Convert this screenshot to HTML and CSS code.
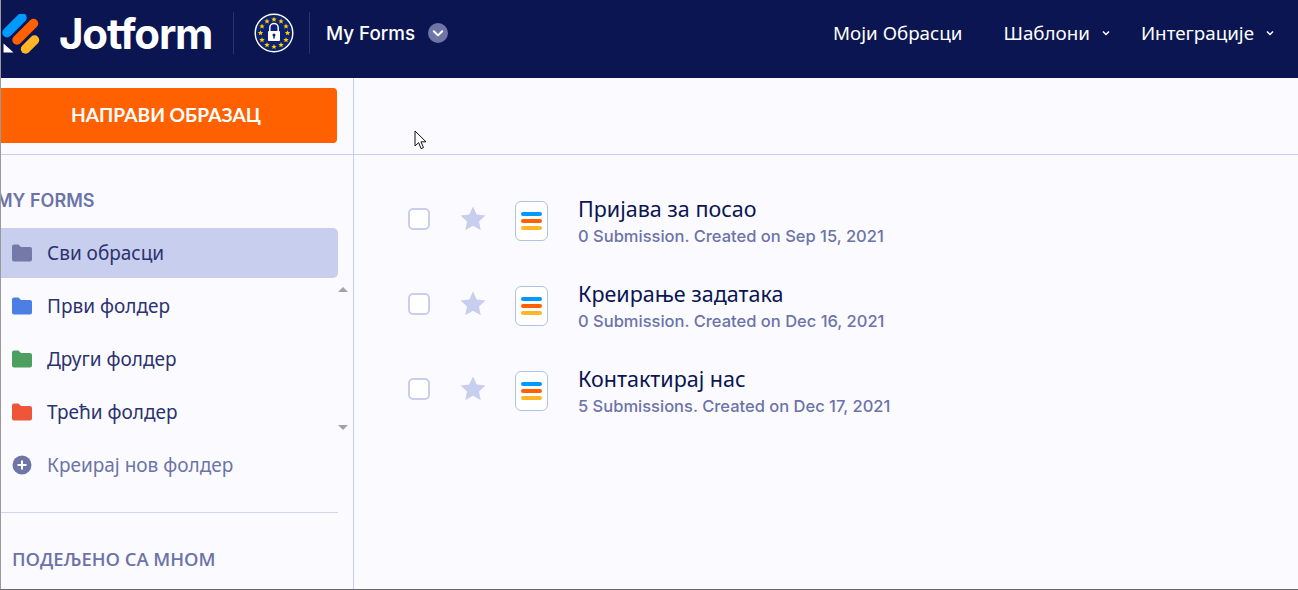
FILE: index.html
```html
<!DOCTYPE html>
<html>
<head>
  <meta charset="UTF-8">
  <title>My Forms</title>
  <link rel="stylesheet" href="styles.css">
</head>
<body>
  <div class="page">
    <header class="topbar">
      <svg class="logo-mark" width="40" height="40" viewBox="0 0 40 40">
        <line x1="7" y1="18.7" x2="22" y2="3.7" stroke="#0099FF" stroke-width="9.5" stroke-linecap="round"/>
        <line x1="17" y1="26" x2="33.5" y2="9.5" stroke="#FF6100" stroke-width="9.5" stroke-linecap="round"/>
        <line x1="25.5" y1="35" x2="34.5" y2="26" stroke="#FFB629" stroke-width="9.5" stroke-linecap="round"/>
        <path d="M3.5 29.5 L13.5 38.5 L3.5 38.5 Z" fill="#fff"/>
      </svg>
      <span class="logo-text">Jotform</span>
      <span class="bar-sep"></span>
      <svg class="eu-badge" width="40" height="40" viewBox="0 0 40 40">
        <defs>
          <polygon id="st" points="0,-2.8 .8,-.9 2.7,-.9 1.2,.4 1.7,2.3 0,1.2 -1.7,2.3 -1.2,.4 -2.7,-.9 -.8,-.9" fill="#FFCC00"/>
        </defs>
        <circle cx="20" cy="20" r="18.8" fill="#0C2270" stroke="#fff" stroke-width="1.4"/>
        <use href="#st" x="20" y="6.5"/><use href="#st" x="27" y="8.4"/><use href="#st" x="32" y="13.4"/>
        <use href="#st" x="33.5" y="20"/><use href="#st" x="32" y="27"/><use href="#st" x="27" y="32"/>
        <use href="#st" x="20" y="33.8"/><use href="#st" x="13" y="32"/><use href="#st" x="8" y="27"/>
        <use href="#st" x="6.5" y="20"/><use href="#st" x="8" y="13.4"/><use href="#st" x="13" y="8.4"/>
        <path d="M15.8 18v-3.2a4.2 4.2 0 0 1 8.4 0V18" fill="none" stroke="#fff" stroke-width="1.5"/>
        <rect x="14" y="18" width="12" height="10" rx="1" fill="#fff"/>
        <circle cx="20" cy="22" r="1.5" fill="#0C2270"/>
        <rect x="19.3" y="22" width="1.4" height="3.6" fill="#0C2270"/>
      </svg>
      <span class="bar-sep"></span>
      <span class="crumb">My Forms</span>
      <svg class="crumb-arrow" width="20" height="20" viewBox="0 0 20 20">
        <circle cx="10" cy="10" r="10" fill="#6F76A7"/>
        <path d="M5.8 8.2 L10 12.4 L14.2 8.2" fill="none" stroke="#fff" stroke-width="2" stroke-linecap="round" stroke-linejoin="round"/>
      </svg>
      <nav class="nav">
        <a class="nav-link first">Моји Обрасци</a>
        <a class="nav-link">Шаблони
          <svg width="8" height="6" viewBox="0 0 8 6"><path d="M1 1.5 L4 4.5 L7 1.5" fill="none" stroke="#fff" stroke-width="1.5"/></svg>
        </a>
        <a class="nav-link">Интеграције
          <svg width="8" height="6" viewBox="0 0 8 6"><path d="M1 1.5 L4 4.5 L7 1.5" fill="none" stroke="#fff" stroke-width="1.5"/></svg>
        </a>
      </nav>
    </header>

    <div class="workspace">
      <div class="create-cell">
        <button class="create-btn">НАПРАВИ ОБРАЗАЦ</button>
      </div>
      <div class="toolbar-cell"></div>

      <aside class="sidebar">
        <div class="side-title cut">MY FORMS</div>
        <div class="folders">
          <span class="scroll-up"></span>
          <span class="scroll-down"></span>
          <div class="folder selected">
            <svg class="folder-icon" viewBox="0 0 20 17"><path d="M0 2a2 2 0 0 1 2-2h4.5l2.5 2.5h9a2 2 0 0 1 2 2V15a2 2 0 0 1-2 2H2a2 2 0 0 1-2-2z" fill="#7479A8"/></svg>
            Сви обрасци
          </div>
          <div class="folder">
            <svg class="folder-icon" viewBox="0 0 20 17"><path d="M0 2a2 2 0 0 1 2-2h4.5l2.5 2.5h9a2 2 0 0 1 2 2V15a2 2 0 0 1-2 2H2a2 2 0 0 1-2-2z" fill="#4C7FE3"/></svg>
            Први фолдер
          </div>
          <div class="folder">
            <svg class="folder-icon" viewBox="0 0 20 17"><path d="M0 2a2 2 0 0 1 2-2h4.5l2.5 2.5h9a2 2 0 0 1 2 2V15a2 2 0 0 1-2 2H2a2 2 0 0 1-2-2z" fill="#4C9F5F"/></svg>
            Други фолдер
          </div>
          <div class="folder">
            <svg class="folder-icon" viewBox="0 0 20 17"><path d="M0 2a2 2 0 0 1 2-2h4.5l2.5 2.5h9a2 2 0 0 1 2 2V15a2 2 0 0 1-2 2H2a2 2 0 0 1-2-2z" fill="#EE5539"/></svg>
            Трећи фолдер
          </div>
          <div class="folder add">
            <svg class="folder-icon" viewBox="0 0 20 20"><circle cx="10" cy="10" r="9.5" fill="#6F76A7"/><path d="M10 5.5v9M5.5 10h9" stroke="#fff" stroke-width="2"/></svg>
            Креирај нов фолдер
          </div>
        </div>
        <div class="side-line"></div>
        <div class="side-title">ПОДЕЉЕНО СА МНОМ</div>
      </aside>

      <main class="forms">
        <div class="form-row">
          <span class="check"></span>
          <svg class="star" width="26" height="25" viewBox="0 0 26 25"><path d="M13 .5l3.7 8 8.8 1-6.5 6 1.8 8.7-7.8-4.4-7.8 4.4 1.8-8.7-6.5-6 8.8-1z" fill="#C8CEED"/></svg>
          <span class="form-icon"><i class="blue"></i><i class="orange"></i><i class="yellow"></i></span>
          <div class="form-info">
            <div class="form-name">Пријава за посао</div>
            <div class="form-meta">0 Submission. Created on Sep 15, 2021</div>
          </div>
        </div>
        <div class="form-row">
          <span class="check"></span>
          <svg class="star" width="26" height="25" viewBox="0 0 26 25"><path d="M13 .5l3.7 8 8.8 1-6.5 6 1.8 8.7-7.8-4.4-7.8 4.4 1.8-8.7-6.5-6 8.8-1z" fill="#C8CEED"/></svg>
          <span class="form-icon"><i class="blue"></i><i class="orange"></i><i class="yellow"></i></span>
          <div class="form-info">
            <div class="form-name">Креирање задатака</div>
            <div class="form-meta">0 Submission. Created on Dec 16, 2021</div>
          </div>
        </div>
        <div class="form-row">
          <span class="check"></span>
          <svg class="star" width="26" height="25" viewBox="0 0 26 25"><path d="M13 .5l3.7 8 8.8 1-6.5 6 1.8 8.7-7.8-4.4-7.8 4.4 1.8-8.7-6.5-6 8.8-1z" fill="#C8CEED"/></svg>
          <span class="form-icon"><i class="blue"></i><i class="orange"></i><i class="yellow"></i></span>
          <div class="form-info">
            <div class="form-name">Контактирај нас</div>
            <div class="form-meta">5 Submissions. Created on Dec 17, 2021</div>
          </div>
        </div>
      </main>
    </div>

    <svg class="cursor" width="14" height="20" viewBox="0 0 14 20"><path d="M1 1v15l3.6-3.4 2.5 6 2.4-1-2.5-5.8H12z" fill="#fff" stroke="#111" stroke-width="1"/></svg>
  </div>
</body>
</html>
```

FILE: styles.css
```css
body {
  margin: 0;
  font-family: "Noto Sans", sans-serif;
  background-color: #fbfbff;
  color: #0a1551;
}

.page {
  position: relative;
  height: 590px;
  box-sizing: border-box;
  border-left: 1px solid #9a9a9a;
  border-bottom: 1px solid #6a6a6a;
  overflow: hidden;
}

.topbar {
  display: flex;
  align-items: center;
  height: 78px;
  padding-bottom: 12px;
  box-sizing: border-box;
  background-color: #0a1551;
  color: #ffffff;
}

.logo-mark {
  flex: none;
  margin-left: -1px;
  margin-top: 2px;
}

.logo-text {
  margin-left: 19px;
  width: 155px;
  font-family: Inter, sans-serif;
  font-size: 42px;
  font-weight: 700;
  letter-spacing: -1.2px;
}

.bar-sep {
  width: 1px;
  height: 42px;
  background-color: #2a3468;
}

.logo-text + .bar-sep {
  margin-left: 19px;
}

.eu-badge {
  margin: 0 15px 0 20px;
}

.crumb {
  margin-left: 16px;
  font-family: Inter, sans-serif;
  font-size: 18.8px;
  font-weight: 500;
}

.crumb-arrow {
  margin-left: 13px;
}

.nav {
  display: flex;
  margin-left: auto;
  gap: 31px;
  padding-right: 24px;
}

.nav-link {
  display: flex;
  align-items: center;
  gap: 12px;
  font-size: 18.8px;
}

.nav-link.first {
  margin-right: 10px;
}

.workspace {
  display: grid;
  grid-template-columns: 353px 1fr;
  grid-template-rows: 77px 1fr;
  height: 511px;
}

.create-cell {
  padding: 10px 16px 0 0;
  border-right: 1px solid #c8ceed;
  border-bottom: 1px solid #c8ceed;
}

.toolbar-cell {
  border-bottom: 1px solid #c8ceed;
}

.create-btn {
  display: block;
  width: 100%;
  height: 55px;
  border: none;
  border-radius: 0 4px 4px 0;
  background-color: #ff6100;
  color: #ffffff;
  font-family: Lato, sans-serif;
  font-size: 19.2px;
  font-weight: 700;
  padding: 0 6px 2px 0;
}

.sidebar {
  border-right: 1px solid #c8ceed;
  padding-right: 15px;
}

.side-title {
  padding-left: 11px;
  font-family: "Open Sans", sans-serif;
  font-size: 18.4px;
  font-weight: 600;
  color: #6c73a8;
}

.side-title.cut {
  margin-top: 35px;
  padding-left: 0;
  margin-left: -5px;
  font-family: Inter, sans-serif;
  font-size: 18px;
}

.folders {
  position: relative;
  display: flex;
  flex-direction: column;
  gap: 3px;
  margin-top: 17px;
}

.folder {
  display: flex;
  align-items: center;
  height: 50px;
  padding-left: 11px;
  gap: 15px;
  font-size: 19px;
  color: #2b3270;
  border-radius: 0 5px 5px 0;
}

.folder.selected {
  background-color: #c8ceed;
}

.folder.add {
  color: #6c73a8;
}

.folder-icon {
  flex: none;
  width: 20px;
  height: 20px;
}

.scroll-up,
.scroll-down {
  position: absolute;
  right: -10px;
  width: 0;
  height: 0;
  border-left: 5px solid transparent;
  border-right: 5px solid transparent;
}

.scroll-up {
  top: 59px;
  border-bottom: 5px solid #a3a3a3;
}

.scroll-down {
  top: 197px;
  border-top: 5px solid #a3a3a3;
}

.side-line {
  height: 1px;
  margin: 22px 0 33px;
  background-color: #d3d6ea;
}

.forms {
  padding: 21px 0 0 54px;
}

.form-row {
  display: flex;
  align-items: center;
  height: 85px;
}

.check {
  width: 22px;
  height: 22px;
  box-sizing: border-box;
  border: 2px solid #c8ceed;
  border-radius: 5px;
  background-color: #ffffff;
}

.star {
  margin-left: 30px;
}

.form-icon {
  display: flex;
  flex-direction: column;
  justify-content: center;
  gap: 3px;
  width: 33px;
  height: 40px;
  box-sizing: border-box;
  margin: 4px 0 0 29px;
  padding: 0 5px;
  border: 1px solid #adc4e8;
  border-radius: 6px;
  background-color: #ffffff;
}

.form-icon i {
  display: block;
  height: 4px;
  border-radius: 2px;
}

.form-icon .blue {
  background-color: #0099ff;
}

.form-icon .orange {
  background-color: #ff6100;
}

.form-icon .yellow {
  background-color: #ffb629;
}

.form-info {
  margin: 8px 0 0 30px;
}

.form-name {
  font-size: 21.5px;
  line-height: 27px;
}

.form-meta {
  font-family: Inter, sans-serif;
  font-size: 16.5px;
  font-weight: 500;
  line-height: 28px;
  color: #6c73a8;
}

.cursor {
  position: absolute;
  left: 413px;
  top: 130px;
}
```
